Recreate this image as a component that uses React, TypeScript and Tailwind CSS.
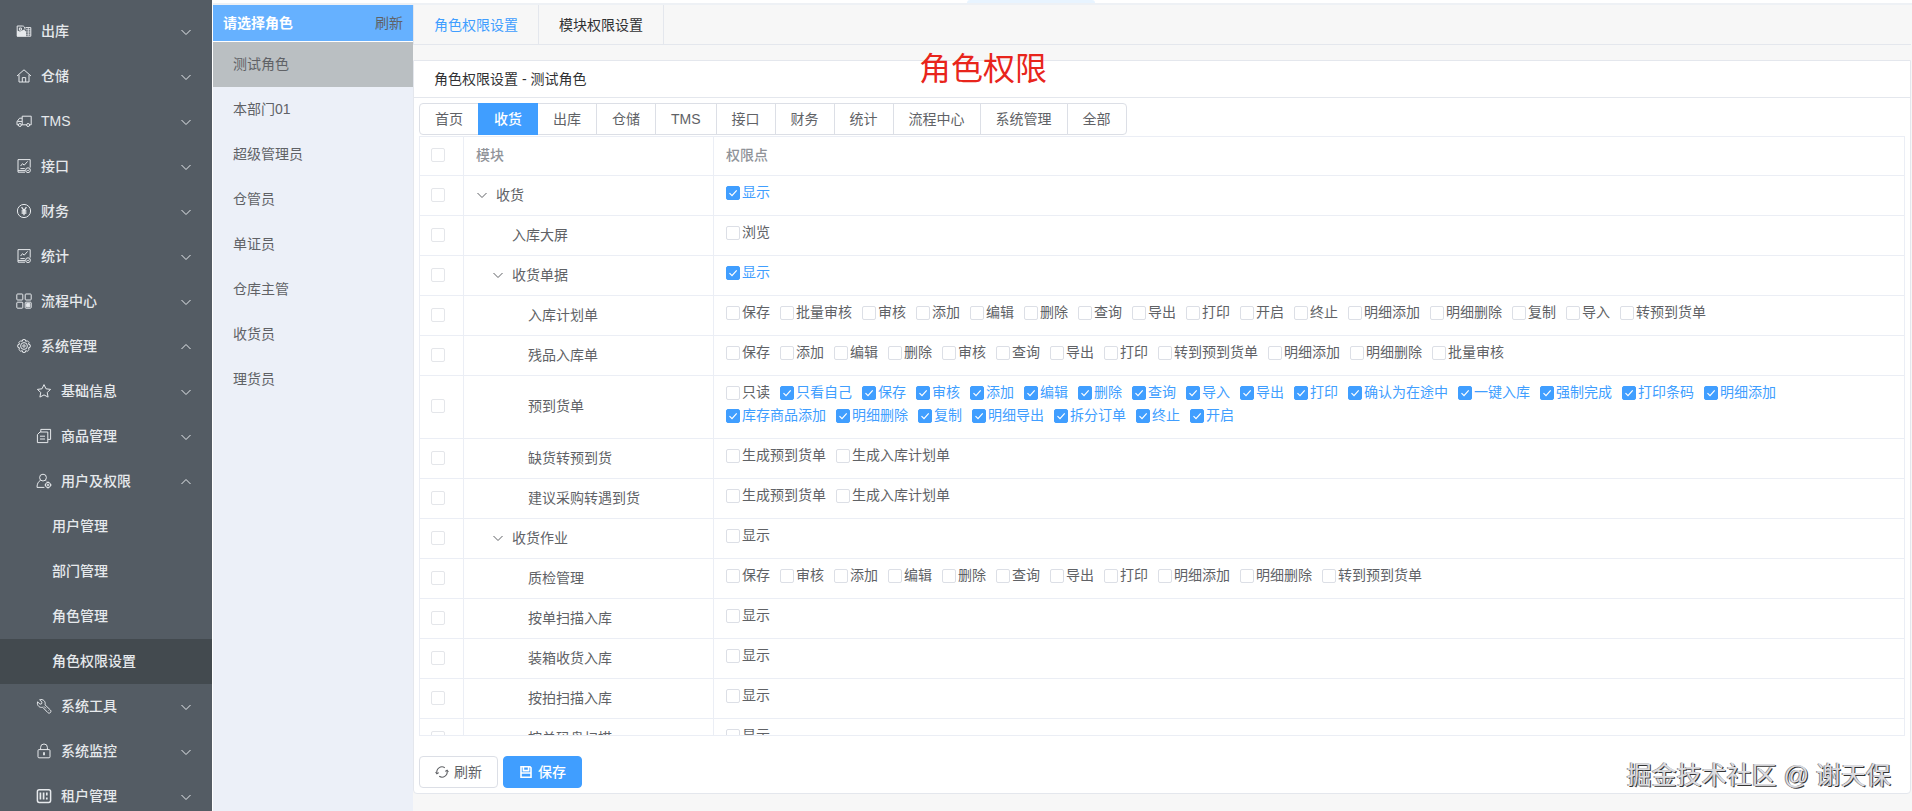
import { useState } from "react";
import type { ReactNode } from "react";

type IconName =
  | "outbound"
  | "house"
  | "truck"
  | "report"
  | "money"
  | "flow"
  | "gear"
  | "star"
  | "copy"
  | "user"
  | "tool"
  | "lock"
  | "tenant";

const iconShapes: Record<IconName, ReactNode> = {
  outbound: (
    <>
      <path d="M1 7.500 4 8.500 8 6.500 10 8.500V13.500H1z" fill="currentColor" stroke="none" />
      <path d="M1.200 13.200V3h5.200c1.800 0 2.600 1.400 2.600 3.500M3.400 5h2v2.200h-2z" />
      <path d="M9.500 4.600h5.300v8.600H1.200" />
      <path d="M10 6.800h4.600M10 9h4.600M10 11.200h4.600M12.300 4.800v8" strokeWidth=".8" />
    </>
  ),
  house: (
    <>
      <path d="M1 8 8 1.800 15 8M3 6.800V14h10V6.800" />
      <path d="M6.300 14V9.600h3.400V14" />
    </>
  ),
  truck: (
    <>
      <path d="M6.200 3.200h9v8.600h-1.400M6.200 3.200v8.600M6.200 5.200H3.600L1 8.600v3.200h1.200M5.600 11.800h5M1.400 8.400h4.600" />
      <circle cx="3.900" cy="12" r="1.500" />
      <circle cx="12.100" cy="12" r="1.500" />
    </>
  ),
  report: (
    <>
      <path d="M9 14.200H2V1.600h12.200v8" />
      <path d="M4.600 8 6.600 5.600l1.600 1.600 3.400-3.800M4.400 10.600h4.400M2 12.600h7" />
      <circle cx="12" cy="12.200" r="2.400" />
      <path d="m11 12.200.8.8 1.400-1.500" />
    </>
  ),
  money: (
    <>
      <circle cx="8" cy="8" r="6.600" />
      <path d="M5.600 4.200 8 7.600l2.400-3.400M8 7.600v4.600M5.600 8h4.800M5.600 10h4.800" strokeWidth="1.300" />
    </>
  ),
  flow: (
    <>
      <rect x=".8" y="1" width="6" height="6" rx=".8" />
      <rect x="9.200" y="1" width="6" height="6" rx=".8" />
      <rect x=".8" y="9.200" width="6" height="6" rx=".8" />
      <rect x="9.200" y="9.200" width="6" height="6" rx=".8" />
      <path d="M10.600 10.600h3.200v3.200h-3.200z" fill="currentColor" />
    </>
  ),
  gear: (
    <>
      <path d="M6.800 1.600h2.400l.5 1.700 1.700-.5 1.700 1.700-.6 1.700 1.700.6v2.400l-1.700.6.6 1.700-1.700 1.700-1.700-.5-.5 1.700H6.800l-.5-1.700-1.700.5-1.700-1.700.6-1.700-1.700-.6V6.800l1.700-.6-.6-1.700 1.700-1.700 1.700.5z" />
      <circle cx="8" cy="8" r="3.400" />
      <circle cx="8" cy="8" r="1.200" />
    </>
  ),
  star: <path d="m8 1.600 2 4.200 4.600.6-3.400 3.100.9 4.600L8 11.900l-4.100 2.200.9-4.600L1.400 6.400 6 5.800z" />,
  copy: (
    <>
      <path d="M4.800 4V1.400h9.800v10h-2.800" />
      <path d="M1.400 6.600 4 4h7.800v10.600H1.400zM4 8.200h5M4 11h5" />
    </>
  ),
  user: (
    <>
      <circle cx="7" cy="4.600" r="3.400" />
      <path d="M4.600 7.200C2.400 8.600 1 10.600 1 14.400h7.400M9.400 7.200l1 .8" />
      <circle cx="12" cy="12" r="2.600" />
      <circle cx="12" cy="12" r=".9" />
      <path d="M12 8.400v1M12 14.600v1M8.600 12h.8M14.600 12h1" />
    </>
  ),
  tool: (
    <>
      <path d="M3.600 1.800 6 4.200l-.4 1.600-1.600.4-2.400-2.400C1 5.600 1.600 7.400 2.800 8.400c1.200 1 2.600 1.200 3.800.8l5.200 5.400c.8.8 2 .6 2.600 0 .6-.6.8-1.800 0-2.600L9 6.800c.4-1.400.2-2.800-.8-4C7 1.600 5.200 1.200 3.600 1.800z" />
      <path d="m8 8.400 2 2M12.400 12.400l.4.4" />
    </>
  ),
  lock: (
    <>
      <rect x="2" y="6.600" width="12" height="8.200" rx="1" />
      <path d="M4.600 6.600V4.400a3.400 3.400 0 0 1 6.800 0v2.200" />
      <path d="M8 9.200v3" strokeWidth="1.800" />
    </>
  ),
  tenant: (
    <>
      <rect x="1.400" y="1.800" width="13.200" height="12.600" rx="1.800" strokeWidth="1.500" />
      <path d="M4.400 4.600v7M7.600 4.600v7M10.800 4.600v3M10.800 9.600v2" strokeWidth="1.700" />
    </>
  ),
};

function Icon({ name }: { name: IconName }) {
  return (
    <svg viewBox="0 0 16 16" className="size-4 shrink-0" fill="none" stroke="currentColor" strokeWidth="1" strokeLinejoin="round" aria-hidden="true">
      {iconShapes[name]}
    </svg>
  );
}

function Chevron({ up = false }: { up?: boolean }) {
  return (
    <svg viewBox="0 0 12 12" className="size-3 shrink-0" fill="none" stroke="currentColor" strokeWidth="1" aria-hidden="true">
      <path d={up ? "M1.500 8 6 3.500 10.500 8" : "M1.500 4 6 8.500 10.500 4"} />
    </svg>
  );
}

type MenuEntry = { label: string; level: 0 | 1 | 2; icon?: IconName; open?: boolean; active?: boolean };

const menu: MenuEntry[] = [
  { label: "出库", level: 0, icon: "outbound" },
  { label: "仓储", level: 0, icon: "house" },
  { label: "TMS", level: 0, icon: "truck" },
  { label: "接口", level: 0, icon: "report" },
  { label: "财务", level: 0, icon: "money" },
  { label: "统计", level: 0, icon: "report" },
  { label: "流程中心", level: 0, icon: "flow" },
  { label: "系统管理", level: 0, icon: "gear", open: true },
  { label: "基础信息", level: 1, icon: "star" },
  { label: "商品管理", level: 1, icon: "copy" },
  { label: "用户及权限", level: 1, icon: "user", open: true },
  { label: "用户管理", level: 2 },
  { label: "部门管理", level: 2 },
  { label: "角色管理", level: 2 },
  { label: "角色权限设置", level: 2, active: true },
  { label: "系统工具", level: 1, icon: "tool" },
  { label: "系统监控", level: 1, icon: "lock" },
  { label: "租户管理", level: 1, icon: "tenant" },
];

const menuIndent = ["pl-4", "pl-9", "pl-[52px]"];

const roles = ["测试角色", "本部门01", "超级管理员", "仓管员", "单证员", "仓库主管", "收货员", "理货员"];

const modules = ["首页", "收货", "出库", "仓储", "TMS", "接口", "财务", "统计", "流程中心", "系统管理", "全部"];

type Row = { name: string; level: 0 | 1 | 2; branch?: boolean; perms: string[]; granted?: string[] };

const rows: Row[] = [
  { name: "收货", level: 0, branch: true, perms: ["显示"], granted: ["显示"] },
  { name: "入库大屏", level: 1, perms: ["浏览"] },
  { name: "收货单据", level: 1, branch: true, perms: ["显示"], granted: ["显示"] },
  {
    name: "入库计划单",
    level: 2,
    perms: ["保存", "批量审核", "审核", "添加", "编辑", "删除", "查询", "导出", "打印", "开启", "终止", "明细添加", "明细删除", "复制", "导入", "转预到货单"],
  },
  {
    name: "残品入库单",
    level: 2,
    perms: ["保存", "添加", "编辑", "删除", "审核", "查询", "导出", "打印", "转到预到货单", "明细添加", "明细删除", "批量审核"],
  },
  {
    name: "预到货单",
    level: 2,
    perms: ["只读", "只看自己", "保存", "审核", "添加", "编辑", "删除", "查询", "导入", "导出", "打印", "确认为在途中", "一键入库", "强制完成", "打印条码", "明细添加", "库存商品添加", "明细删除", "复制", "明细导出", "拆分订单", "终止", "开启"],
    granted: ["只看自己", "保存", "审核", "添加", "编辑", "删除", "查询", "导入", "导出", "打印", "确认为在途中", "一键入库", "强制完成", "打印条码", "明细添加", "库存商品添加", "明细删除", "复制", "明细导出", "拆分订单", "终止", "开启"],
  },
  { name: "缺货转预到货", level: 2, perms: ["生成预到货单", "生成入库计划单"] },
  { name: "建议采购转遇到货", level: 2, perms: ["生成预到货单", "生成入库计划单"] },
  { name: "收货作业", level: 1, branch: true, perms: ["显示"] },
  {
    name: "质检管理",
    level: 2,
    perms: ["保存", "审核", "添加", "编辑", "删除", "查询", "导出", "打印", "明细添加", "明细删除", "转到预到货单"],
  },
  { name: "按单扫描入库", level: 2, perms: ["显示"] },
  { name: "装箱收货入库", level: 2, perms: ["显示"] },
  { name: "按拍扫描入库", level: 2, perms: ["显示"] },
  { name: "按单码盘扫描", level: 2, perms: ["显示"] },
];

const treeIndent = ["pl-3", "pl-7", "pl-11"];

function CheckMark() {
  return (
    <svg viewBox="0 0 14 14" className="pointer-events-none col-start-1 row-start-1 size-3.5" fill="none" stroke="#fff" strokeWidth="1.200" aria-hidden="true">
      <path d="m3.500 7.200 2.500 2.500 4.700-5.400" />
    </svg>
  );
}

function Permission({ label, initial }: { label: string; initial: boolean }) {
  const [on, setOn] = useState(initial);
  return (
    <label className={`mr-2.5 flex items-center gap-0.5 leading-[23px] ${on ? "text-[#409eff]" : "text-[#606266]"}`}>
      <span className="grid">
        <input
          type="checkbox"
          checked={on}
          onChange={() => setOn(!on)}
          className="col-start-1 row-start-1 size-3.5 appearance-none rounded-xs border border-[#dcdfe6] bg-white checked:border-[#409eff] checked:bg-[#409eff]"
        />
        {on && <CheckMark />}
      </span>
      {label}
    </label>
  );
}

function RowCheck({ label }: { label: string }) {
  return (
    <input
      type="checkbox"
      aria-label={label}
      className="block size-3.5 appearance-none rounded-xs border border-[#e4e6ea] bg-white checked:border-[#409eff] checked:bg-[#409eff]"
    />
  );
}

export default function App() {
  const [role, setRole] = useState(roles[0]);
  const [module, setModule] = useState("收货");

  return (
    <div className="relative flex h-screen overflow-hidden bg-white font-['Liberation_Sans','Noto_Sans_CJK_SC',sans-serif] text-sm text-[#606266]">
      <nav className="w-[212px] shrink-0 overflow-hidden bg-[#545c64] pt-[9px] font-medium text-[#e6e9ec]">
        {menu.map((m) => (
          <a
            key={m.label}
            href="#"
            className={`flex h-[45px] items-center pr-5 pb-0.5 ${menuIndent[m.level]} ${m.active ? "bg-[#434a4f]" : ""}`}
          >
            {m.icon && <Icon name={m.icon} />}
            <span className={m.icon ? "ml-[9px] flex-1" : "flex-1"}>{m.label}</span>
            {m.icon && (
              <span className="pt-0.5">
                <Chevron up={m.open} />
              </span>
            )}
          </a>
        ))}
      </nav>

      <div className="flex min-w-0 flex-1 flex-col pl-px">
        <div className="flex h-[3px] shrink-0 justify-center bg-white">
          <div className="mr-16 h-[3px] w-32 rounded-t-sm bg-[#e8f4ff]" />
        </div>
        <div className="flex min-h-0 flex-1 border-t-2 border-[#eef1f5]">
          <aside className="w-[200px] shrink-0 bg-[#ecf0f8]">
            <div className="flex h-[37px] items-center justify-between border-b border-white bg-[#66b1ff] px-2.5">
              <h2 className="font-bold text-white">请选择角色</h2>
              <button type="button">刷新</button>
            </div>
            <ul>
              {roles.map((r) => (
                <li key={r}>
                  <button
                    type="button"
                    onClick={() => setRole(r)}
                    className={`flex h-[45px] w-full items-center px-5 pb-0.5 text-left ${r === role ? "bg-[#babfc2]" : ""}`}
                  >
                    {r}
                  </button>
                </li>
              ))}
            </ul>
          </aside>

          <main className="flex min-w-0 flex-1 flex-col bg-[#f7f7f7] pr-px">
            <div className="flex h-10 shrink-0 border-b border-l border-[#e4e7ed]">
              <button type="button" className="border-r border-[#e4e7ed] px-5 text-[#409eff]">
                角色权限设置
              </button>
              <button type="button" className="border-r border-[#e4e7ed] px-5 text-[#303133]">
                模块权限设置
              </button>
            </div>

            <section className="mt-[15px] mb-[17px] flex min-h-0 flex-1 flex-col rounded-b-sm border border-[#e4e7ed] bg-white">
              <h1 className="flex h-[37px] shrink-0 items-center border-b border-[#e4e7ed] px-5 text-[#303133]">角色权限设置 - {role}</h1>

              <div className="flex min-h-0 flex-1 flex-col p-[5px]">
                <div className="flex shrink-0 text-[#606266]">
                  {modules.map((m) => (
                    <button
                      key={m}
                      type="button"
                      onClick={() => setModule(m)}
                      className={`-ml-px h-8 border px-[15px] first:ml-0 first:rounded-l last:rounded-r ${
                        m === module ? "z-10 border-[#409eff] bg-[#409eff] font-medium text-white" : "border-[#dcdfe6] bg-white"
                      }`}
                    >
                      {m}
                    </button>
                  ))}
                </div>

                <div className="mt-px min-h-0 flex-1 overflow-hidden border-y border-l border-[#ebeef5]">
                  <table className="w-full table-fixed border-separate border-spacing-0">
                    <colgroup>
                      <col className="w-11" />
                      <col className="w-[250px]" />
                      <col />
                    </colgroup>
                    <thead>
                      <tr className="h-[39px] text-left text-[#909399]">
                        <th className="border-b border-r border-[#ebeef5] pb-0.5 pl-[11px]">
                          <RowCheck label="全选" />
                        </th>
                        <th className="border-b border-r border-[#ebeef5] pb-0.5 pl-3 font-medium">模块</th>
                        <th className="border-b border-r border-[#ebeef5] pb-0.5 pl-3 font-medium">权限点</th>
                      </tr>
                    </thead>
                    <tbody>
                      {rows.map((row) => (
                        <tr key={row.name} className="h-10">
                          <td className="border-b border-r border-[#ebeef5] pb-0.5 pl-[11px]">
                            <RowCheck label={row.name} />
                          </td>
                          <td className={`border-b border-r border-[#ebeef5] pb-0.5 ${treeIndent[row.level]}`}>
                            <div className="flex items-center">
                              <span className="w-5 shrink-0">
                                {row.branch && (
                                  <button type="button" aria-label={`收起${row.name}`} className="block">
                                    <Chevron />
                                  </button>
                                )}
                              </span>
                              {row.name}
                            </div>
                          </td>
                          <td className="border-b border-r border-[#ebeef5] pt-[5px] pr-2.5 pb-[11px] pl-3 align-top">
                            <div className="flex flex-wrap">
                              {row.perms.map((p) => (
                                <Permission key={p} label={p} initial={row.granted?.includes(p) ?? false} />
                              ))}
                            </div>
                          </td>
                        </tr>
                      ))}
                    </tbody>
                  </table>
                </div>

                <div className="mt-5 flex shrink-0 gap-[5px]">
                  <button type="button" className="flex h-8 items-center gap-[5px] rounded border border-[#dcdfe6] bg-white px-[15px]">
                    <svg viewBox="0 0 14 14" className="size-3.5" fill="none" stroke="currentColor" strokeWidth="1.100" aria-hidden="true">
                      <path d="M2 8.400A5.200 5.200 0 0 1 9.800 2.700M12 5.600A5.200 5.200 0 0 1 4.200 11.300" />
                      <path d="M.6 7 1.900 8.800 3.800 7.600M13.400 7 12.100 5.200 10.200 6.400" />
                    </svg>
                    刷新
                  </button>
                  <button type="button" className="flex h-8 items-center gap-[5px] rounded border border-[#409eff] bg-[#409eff] px-[15px] font-medium text-white">
                    <svg viewBox="0 0 14 14" className="size-3.5" fill="none" stroke="currentColor" strokeWidth="1.600" aria-hidden="true">
                      <path d="M2 1.800h9l1 1v9.400H2zM4.400 2v3.600h5.200V2M2.400 8h9.400" />
                    </svg>
                    保存
                  </button>
                </div>
              </div>
            </section>
          </main>
        </div>
      </div>

      <p className="pointer-events-none absolute top-[45px] left-[919px] z-20 text-[32px] leading-[48px] text-[#e8251c]">角色权限</p>
      <p className="pointer-events-none absolute right-[21px] bottom-[18px] z-20 text-[25px] leading-9 text-[#dcdce0] [text-shadow:-1px_0_0_#8a8a8a,1px_1px_0_#333]">
        掘金技术社区 @ 谢天保
      </p>
    </div>
  );
}
